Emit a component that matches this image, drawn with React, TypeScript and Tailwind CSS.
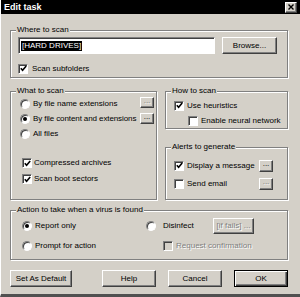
import React from "react";

const raised =
  "bg-[#d4d0c8] border border-t-white border-l-white border-b-[#404040] border-r-[#404040] shadow-[inset_-1px_-1px_0_#808080]";
const disabledText = "text-[#808080] [text-shadow:1px_1px_0_#fff]";

function Check({ checked, disabled }: { checked?: boolean; disabled?: boolean }) {
  return (
    <span
      className={`w-[10px] h-[10px] shrink-0 flex items-center justify-center border border-t-[#808080] border-l-[#808080] border-b-white border-r-white shadow-[inset_1px_1px_0_#404040] ${
        disabled ? "bg-[#d4d0c8]" : "bg-white"
      }`}
    >
      {checked && (
        <svg width="7" height="7" viewBox="0 0 7 7">
          <polyline points="0.8,3.2 2.6,5.2 6.2,1" fill="none" stroke="#000" strokeWidth="1.6" />
        </svg>
      )}
    </span>
  );
}

function Radio({ checked }: { checked?: boolean }) {
  return (
    <span className="w-[10px] h-[10px] shrink-0 rounded-full bg-white border border-t-[#808080] border-l-[#808080] border-b-white border-r-white shadow-[inset_1px_1px_0_#404040] flex items-center justify-center">
      {checked && <span className="w-[4px] h-[4px] rounded-full bg-black" />}
    </span>
  );
}

function Btn({
  children,
  className = "",
  disabled,
  isDefault,
}: {
  children: React.ReactNode;
  className?: string;
  disabled?: boolean;
  isDefault?: boolean;
}) {
  const look = isDefault
    ? "bg-[#d4d0c8] border border-black shadow-[inset_1px_1px_0_#fff,inset_-1px_-1px_0_#404040,inset_-2px_-2px_0_#808080]"
    : raised;
  return (
    <div
      className={`${look} flex items-center justify-center shrink-0 whitespace-nowrap ${disabled ? disabledText : ""} ${className}`}
    >
      {children}
    </div>
  );
}

function Group({
  label,
  className = "",
  children,
}: {
  label: string;
  className?: string;
  children: React.ReactNode;
}) {
  return (
    <div className={`relative border border-[#808080] shadow-[inset_1px_1px_0_#fff,1px_1px_0_#fff] ${className}`}>
      <span className="absolute top-[-6px] left-[5px] px-[1px] bg-[#d4d0c8] leading-[10px] whitespace-nowrap">
        {label}
      </span>
      {children}
    </div>
  );
}

export default function App() {
  return (
    <div className="w-[300px] h-[297px] overflow-hidden bg-[#d4d0c8] text-black text-[8px] leading-[10px] whitespace-nowrap font-['Liberation_Sans',Arial,sans-serif] border-b-[3px] border-b-[#505050] border-l border-l-white flex flex-col">
      {/* title bar */}
      <div className="h-[14px] bg-black flex items-center justify-between pl-[3px] pr-[3px]">
        <span className="text-white font-bold text-[9px]">Edit task</span>
        <Btn className="w-[12px] h-[11px]">
          <svg width="6" height="6" viewBox="0 0 6 6">
            <path d="M0.5 0.5 L5.5 5.5 M5.5 0.5 L0.5 5.5" stroke="#000" strokeWidth="1.4" />
          </svg>
        </Btn>
      </div>

      <div className="flex flex-col pl-[9px] pr-[12px]">
        {/* where to scan */}
        <Group label="Where to scan" className="mt-[16px] h-[48px] pt-[6px] px-[7px] flex flex-col">
          <div className="flex items-center">
            <div className="w-[197px] h-[17px] bg-white border border-t-[#808080] border-l-[#808080] border-b-white border-r-white shadow-[inset_1px_1px_0_#404040] flex items-center pl-[2px]">
              <span className="bg-black text-white px-[1px]">[HARD DRIVES]</span>
            </div>
            <Btn className="ml-[7px] w-[55px] h-[17px]">Browse...</Btn>
          </div>
          <div className="mt-[8px] h-[13px] flex items-center gap-[4px]">
            <Check checked />
            <span>Scan subfolders</span>
          </div>
        </Group>

        <div className="mt-[13px] flex items-start gap-[8px]">
          {/* what to scan */}
          <Group label="What to scan" className="w-[147px] h-[109px] pt-[4px] pl-[9px] pr-[2px] flex flex-col">
            <div className="h-[15px] flex items-center gap-[3px]">
              <Radio />
              <span>By file name extensions</span>
              <Btn disabled className="ml-auto w-[14px] h-[11px] -mt-[3px] pb-[3px]">...</Btn>
            </div>
            <div className="h-[15px] flex items-center gap-[3px]">
              <Radio checked />
              <span className="tracking-[-0.1px]">By file content and extensions</span>
              <Btn className="ml-auto w-[14px] h-[11px] pb-[3px]">...</Btn>
            </div>
            <div className="h-[15px] flex items-center gap-[3px]">
              <Radio />
              <span>All files</span>
            </div>
            <div className="mt-[14px] h-[16px] pl-[2px] flex items-center gap-[2px]">
              <Check checked />
              <span>Compressed archives</span>
            </div>
            <div className="h-[16px] pl-[2px] flex items-center gap-[2px]">
              <Check checked />
              <span>Scan boot sectors</span>
            </div>
          </Group>

          <div className="w-[123px] flex flex-col">
            {/* how to scan */}
            <Group label="How to scan" className="h-[38px] pt-[6px] pl-[8px] flex flex-col">
              <div className="h-[15px] flex items-center gap-[3px]">
                <Check checked />
                <span>Use heuristics</span>
              </div>
              <div className="h-[15px] pl-[14px] flex items-center gap-[3px]">
                <Check />
                <span>Enable neural network</span>
              </div>
            </Group>

            {/* alerts */}
            <Group label="Alerts to generate" className="mt-[18px] h-[53px] pt-[10px] pl-[8px] pr-[14px] flex flex-col">
              <div className="h-[15px] flex items-center gap-[3px]">
                <Check checked />
                <span>Display a message</span>
                <Btn className="ml-auto w-[14px] h-[12px] pb-[3px]">...</Btn>
              </div>
              <div className="mt-[3px] h-[15px] flex items-center gap-[3px]">
                <Check />
                <span>Send email</span>
                <Btn disabled className="ml-auto w-[14px] h-[12px] pb-[3px]">...</Btn>
              </div>
            </Group>
          </div>
        </div>

        {/* action */}
        <Group label="Action to take when a virus is found" className="mt-[10px] h-[50px] pt-[7px] pl-[11px] flex">
          <div className="w-[124px] flex flex-col">
            <div className="h-[16px] flex items-center gap-[3px]">
              <Radio checked />
              <span>Report only</span>
            </div>
            <div className="mt-[4px] h-[15px] flex items-center gap-[3px]">
              <Radio />
              <span>Prompt for action</span>
            </div>
          </div>
          <div className="flex flex-col">
            <div className="h-[16px] flex items-center">
              <Radio />
              <span className="ml-[7px] w-[50px]">Disinfect</span>
              <Btn disabled className="w-[41px] h-[16px]">[if fails] ...</Btn>
            </div>
            <div className="mt-[4px] h-[15px] pl-[17px] flex items-center gap-[3px]">
              <Check disabled />
              <span className={disabledText}>Request confirmation</span>
            </div>
          </div>
        </Group>

        {/* buttons */}
        <div className="mt-[10px] h-[17px] flex justify-between">
          <Btn className="w-[62px] h-[17px]">Set As Default</Btn>
          <div className="flex gap-[12px]">
            <Btn className="w-[54px] h-[17px]">Help</Btn>
            <Btn className="w-[54px] h-[17px]">Cancel</Btn>
            <Btn isDefault className="w-[54px] h-[17px]">OK</Btn>
          </div>
        </div>
      </div>
    </div>
  );
}
